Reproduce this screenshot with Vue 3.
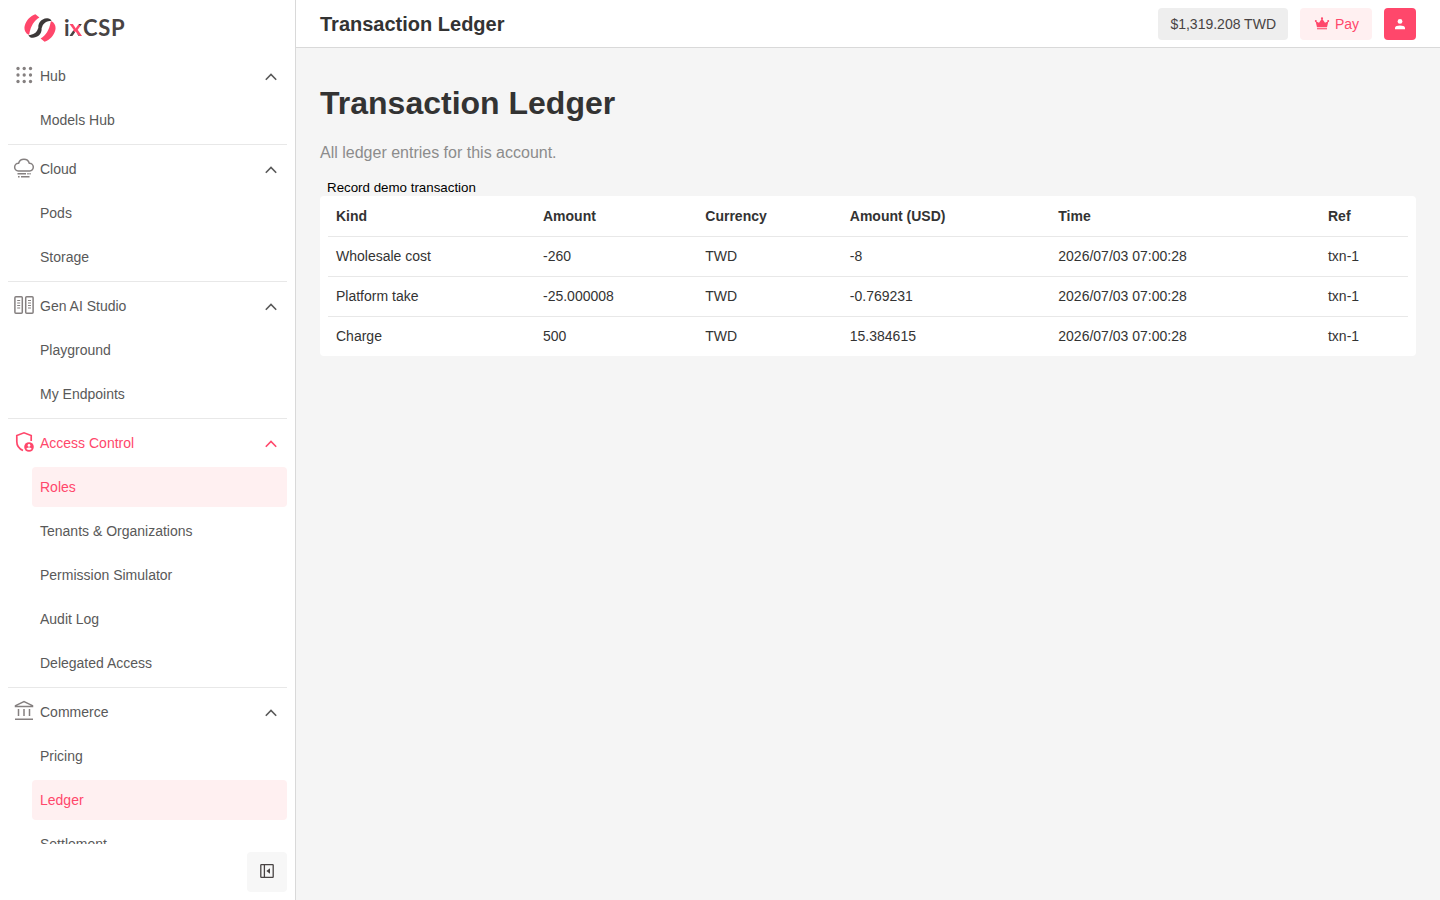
<template>
  <div class="layout">
    <aside class="sidebar">
      <div class="logo">
        <svg class="logo-mark" width="32" height="28" viewBox="0 0 32 28">
          <g v-for="turn in [0, 180]" :key="turn" :transform="`rotate(${turn} 16 14)`">
            <path d="M11.4 0.2 15.4 3.4C10 6.8 7 11 5.2 20.4L4.4 20.8C0.8 18.8-0.2 15 0.8 11.4 2.4 6 6.2 2 11.4 0.2Z" fill="#ff476b" />
            <path d="M4.4 21.2C9.4 21 12.8 18.8 14 14.6L17.2 12.6C19 17.6 15.4 23.6 9 23.8 6.8 23.9 5.2 22.8 4.4 21.2Z" fill="#3c3838" />
          </g>
        </svg>
        <span class="logo-text">i<span class="logo-x">x</span>CSP</span>
      </div>

      <nav class="menu">
        <div v-for="group in groups" :key="group.label" class="menu-group">
          <div class="menu-title" :class="{ active: group.active }">
            <svg class="menu-icon" width="24" height="24" viewBox="0 0 24 24" fill="none" stroke="currentColor" stroke-width="1.5">
              <g v-if="group.icon === 'grid'" fill="currentColor" stroke="none">
                <template v-for="y in [5.5, 12, 18.5]" :key="y">
                  <circle v-for="x in [6, 12.2, 18.5]" :key="x" :cx="x" :cy="y" r="1.65" />
                </template>
              </g>
              <g v-else-if="group.icon === 'cloud'">
                <path d="M6.3 14.9A3.8 3.8 0 0 1 6.6 7.3 5.6 5.6 0 0 1 17.3 7.3 3.8 3.8 0 0 1 17.7 14.9Z" />
                <path d="M5.5 17.8H14M15.3 17.8H16.7M17.4 17.8H18.7M6 20.7H7.6M9 20.7H17.5" />
              </g>
              <g v-else-if="group.icon === 'servers'">
                <rect x="2.9" y="3.7" width="7.4" height="16.6" rx="1" />
                <rect x="13.7" y="3.7" width="7.4" height="16.6" rx="1" />
                <path d="M5.2 7.5H8.2M5.2 10H8.2M5.2 12.5H8.2M5.2 15H8.2M16 7.5H19M16 10H19M16 12.5H19M16 15H19" stroke-width="1.2" />
              </g>
              <g v-else-if="group.icon === 'shield'">
                <path d="M11 20.5C7 18.8 4.8 15.8 4.8 11.5V5.5L12 2.8 19.2 5.5V11" stroke-width="1.7" />
                <circle cx="17" cy="17" r="4.8" fill="currentColor" stroke="none" />
                <circle cx="17" cy="15.4" r="1.35" fill="#fff" stroke="none" />
                <path d="M14.4 19C14.8 17 19.2 17 19.6 19Q17 21 14.4 19Z" fill="#fff" stroke="none" />
              </g>
              <g v-else>
                <path d="M3.5 7.4V6.6L12 2.5 20.5 6.6V7.4Z" />
                <path d="M6.5 10V17M12 10V17M17.5 10V17M3 20.2H21" />
              </g>
            </svg>
            <span>{{ group.label }}</span>
            <svg class="chevron" width="12" height="8" viewBox="0 0 12 8" fill="none" stroke="currentColor" stroke-width="1.6">
              <path d="M0.8 6.8 6 1.5 11.2 6.8" />
            </svg>
          </div>
          <a v-for="item in group.items" :key="item" class="menu-item" :class="{ active: activeItems.includes(item) }">{{ item }}</a>
        </div>
      </nav>

      <div class="sidebar-footer">
        <button class="collapse-btn">
          <svg width="16" height="16" viewBox="0 0 16 16" fill="none" stroke="currentColor" stroke-width="1.3">
            <rect x="1.8" y="1.6" width="12.4" height="12.8" rx="0.6" />
            <path d="M5.4 1.6V14.4" />
            <path d="M11 5.2V10.8L7.4 8Z" fill="currentColor" stroke="none" />
          </svg>
        </button>
      </div>
    </aside>

    <div class="main">
      <header class="topbar">
        <h2 class="topbar-title">Transaction Ledger</h2>
        <div class="balance">$1,319.208 TWD</div>
        <button class="pay-btn">
          <svg width="16" height="16" viewBox="0 0 16 16" fill="currentColor">
            <path d="M3 11.2 1.6 5.2 5 6.8 8 2.4 11 6.8 14.4 5.2 13 11.2Z" />
            <circle cx="1.8" cy="5" r="1" />
            <circle cx="8" cy="2.3" r="1.1" />
            <circle cx="14.2" cy="5" r="1" />
            <path d="M3 12.2H13V13.3H3Z" />
          </svg>
          <span>Pay</span>
        </button>
        <button class="user-btn">
          <svg width="16" height="16" viewBox="0 0 16 16" fill="currentColor">
            <circle cx="8" cy="5.4" r="2.4" />
            <path d="M3 13.2V11.8C3 8.6 13 8.6 13 11.8V13.2Z" />
          </svg>
        </button>
      </header>

      <main class="content">
        <h1>Transaction Ledger</h1>
        <p class="description">All ledger entries for this account.</p>
        <button class="record-btn">Record demo transaction</button>
        <div class="table-card">
          <table>
            <thead>
              <tr>
                <th v-for="col in columns" :key="col.label" :style="{ width: col.width + 'px' }">{{ col.label }}</th>
              </tr>
            </thead>
            <tbody>
              <tr v-for="row in rows" :key="row[0]">
                <td v-for="(cell, i) in row" :key="i">{{ cell }}</td>
              </tr>
            </tbody>
          </table>
        </div>
      </main>
    </div>
  </div>
</template>

<script setup>
const groups = [
  { label: 'Hub', icon: 'grid', items: ['Models Hub'] },
  { label: 'Cloud', icon: 'cloud', items: ['Pods', 'Storage'] },
  { label: 'Gen AI Studio', icon: 'servers', items: ['Playground', 'My Endpoints'] },
  {
    label: 'Access Control',
    icon: 'shield',
    active: true,
    items: ['Roles', 'Tenants & Organizations', 'Permission Simulator', 'Audit Log', 'Delegated Access']
  },
  { label: 'Commerce', icon: 'bank', items: ['Pricing', 'Ledger', 'Settlement'] }
]

const activeItems = ['Roles', 'Ledger']

const columns = [
  { label: 'Kind', width: 207 },
  { label: 'Amount', width: 162.3 },
  { label: 'Currency', width: 144.5 },
  { label: 'Amount (USD)', width: 208.5 },
  { label: 'Time', width: 269.7 },
  { label: 'Ref', width: 88 }
]

const rows = [
  ['Wholesale cost', '-260', 'TWD', '-8', '2026/07/03 07:00:28', 'txn-1'],
  ['Platform take', '-25.000008', 'TWD', '-0.769231', '2026/07/03 07:00:28', 'txn-1'],
  ['Charge', '500', 'TWD', '15.384615', '2026/07/03 07:00:28', 'txn-1']
]
</script>

<style>
body {
  margin: 0;
  overflow: hidden;
}
</style>

<style scoped>
.layout {
  display: flex;
  height: 100vh;
  background: #f5f5f5;
  color: #333;
  font-family: "Liberation Sans", Arial, sans-serif;
  font-size: 14px;
  line-height: 20px;
}

.layout * {
  box-sizing: border-box;
}

button {
  border: none;
  font-family: inherit;
}

.sidebar {
  display: flex;
  flex-direction: column;
  flex: none;
  width: 296px;
  background: #fff;
  border-right: 1px solid #d9d9d9;
}

.logo {
  display: flex;
  align-items: center;
  gap: 8px;
  flex: none;
  height: 56px;
  padding-left: 24px;
}

.logo-text {
  font-family: Lato, sans-serif;
  font-size: 22px;
  font-weight: 700;
  letter-spacing: 0.7px;
  color: #484343;
}

.logo-x {
  display: inline-block;
  margin: 0 0.8px 0 -0.4px;
  transform: scaleX(1.12);
  background: linear-gradient(45deg, #484343 34%, #ff476b 34%, #ff476b 68%, #484343 68%);
  background-clip: text;
  color: transparent;
}

.menu {
  flex: 1;
  min-height: 0;
  padding: 0 8px;
  overflow: hidden;
}

.menu-group {
  display: flex;
  flex-direction: column;
  gap: 4px;
}

.menu-group + .menu-group {
  margin-top: 4px;
  padding-top: 4px;
  border-top: 1px solid #e8e8e8;
}

.menu-title {
  display: flex;
  align-items: center;
  height: 40px;
  padding: 0 10px 0 4px;
  color: #595959;
}

.menu-icon {
  margin: -2px 4px 0 0;
  color: #858080;
}

.menu-title.active,
.menu-title.active .menu-icon {
  color: #ff476b;
}

.chevron {
  margin: 2px 0 0 auto;
}

.menu-item {
  height: 40px;
  margin-left: 24px;
  padding: 10px 8px;
  border-radius: 4px;
  color: #595959;
}

.menu-item.active {
  background: #fff0f1;
  color: #ff476b;
}

.sidebar-footer {
  display: flex;
  justify-content: flex-end;
  padding: 8px;
}

.collapse-btn {
  width: 40px;
  height: 40px;
  padding: 0 0 2px;
  display: flex;
  align-items: center;
  justify-content: center;
  border-radius: 4px;
  background: #f7f7f7;
  color: #484343;
}

.main {
  flex: 1;
  min-width: 0;
}

.topbar {
  display: flex;
  align-items: center;
  gap: 12px;
  height: 48px;
  padding: 0 24px;
  background: #fff;
  border-bottom: 1px solid #d9d9d9;
}

.topbar-title {
  flex: 1;
  margin: 0;
  font-size: 20px;
  line-height: 28px;
}

.balance {
  height: 32px;
  padding: 6px 12px;
  border-radius: 4px;
  background: #eee;
  color: #484343;
}

.pay-btn {
  display: flex;
  align-items: center;
  gap: 5px;
  width: 72px;
  height: 32px;
  padding: 0 0 0 14px;
  border-radius: 4px;
  background: #fff0f1;
  color: #ff476b;
  font-size: 14px;
}

.user-btn {
  display: flex;
  align-items: center;
  justify-content: center;
  width: 32px;
  height: 32px;
  padding: 0;
  border-radius: 4px;
  background: #ff476b;
  color: #fff;
}

.content {
  padding: 36px 24px;
}

h1 {
  margin: 0;
  font-size: 32px;
  line-height: 38px;
}

.description {
  margin: 19px 0 15px;
  color: #8c8c8c;
  font-size: 16px;
  line-height: 24px;
}

.record-btn {
  display: block;
  height: 16px;
  padding: 0 7px;
  background: none;
  color: #000;
  font-size: 13.3333px;
  line-height: 16px;
}

.table-card {
  padding: 0 8px;
  border-radius: 4px;
  background: #fff;
}

table {
  width: 100%;
  border-collapse: separate;
  border-spacing: 0;
  table-layout: fixed;
}

th,
td {
  height: 40px;
  padding: 0 8px;
  text-align: left;
}

td {
  padding-bottom: 1px;
  border-top: 1px solid #e8e8e8;
}
</style>
